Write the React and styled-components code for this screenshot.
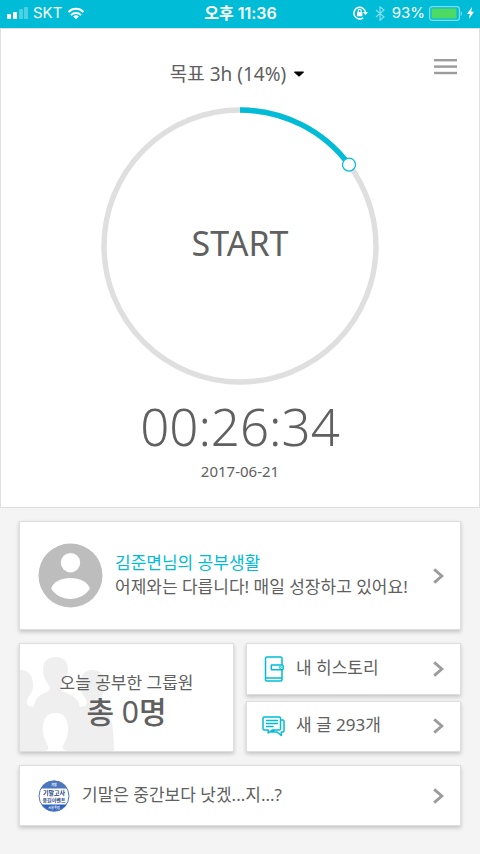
import styled, { createGlobalStyle } from 'styled-components';

const GlobalStyle = createGlobalStyle`
    * {
        box-sizing: border-box;
    }
    body {
        margin: 0;
        background-color: #f4f4f4;
        color: #606060;
        font-family: "Noto Sans", "Noto Sans CJK KR", sans-serif;
    }
    button {
        border: 0;
        padding: 0;
        background: none;
        color: inherit;
        font-family: inherit;
        cursor: pointer;
    }
    svg {
        display: block;
        flex-shrink: 0;
    }
`

const StatusBar = styled.header`
    display: grid;
    grid-template-columns: 1fr auto 1fr;
    align-items: center;
    height: 28px;
    padding: 0 6px 2px 7px;
    background-color: #00bcd7;
    color: #fff;
    font-family: Inter, "Noto Sans CJK KR", sans-serif;
    font-size: 15px;
    line-height: 20px;
`

const StatusGroup = styled.div`
    display: flex;
    align-items: center;
    justify-content: ${props => props.$end ? "flex-end" : "flex-start"};
    gap: ${props => props.$gap || "5px"};
`

const Clock = styled.time`
    font-size: 16px;
    font-weight: 600;
`

const TimerPanel = styled.section`
    display: flex;
    flex-direction: column;
    align-items: center;
    padding-bottom: 26px;
    border: 1px solid #dedede;
    background-color: #fff;
`

const PanelHeader = styled.div`
    width: 100%;
    display: grid;
    grid-template-columns: 1fr auto 1fr;
    align-items: start;
    padding: 24px 22px 0 16px;
`

const GoalButton = styled.button`
    grid-column: 2;
    display: flex;
    align-items: center;
    gap: 8px;
    margin-top: 7px;
    font-size: 19px;
    line-height: 28px;
`

const MenuButton = styled.button`
    justify-self: end;
    height: 28px;
`

const StartButton = styled.button`
    display: grid;
    place-items: center;
    margin-top: 18px;
    border-radius: 50%;

    > * {
        grid-area: 1 / 1;
    }
`

const StartLabel = styled.span`
    font-size: 34px;
    line-height: 40px;
    padding-bottom: 6px;
`

const Elapsed = styled.div`
    margin-top: 5px;
    font-size: 51px;
    font-weight: 300;
    line-height: 70px;
`

const StudyDate = styled.time`
    font-size: 15px;
    line-height: 20px;
`

const Cards = styled.main`
    display: grid;
    grid-template-columns: 1fr 1fr;
    gap: 13px 12px;
    padding: 13px 19px 28px;
`

const Card = styled.a`
    grid-column: ${props => props.$wide ? "1 / -1" : "auto"};
    position: relative;
    display: flex;
    align-items: center;
    gap: ${props => props.$gap || "12px"};
    min-height: ${props => props.$height};
    padding: 0 16px 0 ${props => props.$left || "18px"};
    border: 1px solid #dedede;
    background-color: #fff;
    box-shadow: 0 2px 4px rgba(0, 0, 0, 0.2);
    color: inherit;
    font-size: 17px;
    line-height: 24px;
    text-decoration: none;
`

const CardText = styled.span`
    flex: 1;
    padding-bottom: 2px;
    white-space: nowrap;
`

const UserTitle = styled.span`
    display: block;
    color: #00bcd7;
`

const GroupCard = styled(Card)`
    flex-direction: column;
    justify-content: center;
    gap: 0;
    padding: 4px 0 0;
    overflow: hidden;
`

const GroupArt = styled.svg`
    position: absolute;
    left: 0;
    bottom: 0;
`

const GroupTitle = styled.span`
    position: relative;
`

const GroupCount = styled.strong`
    position: relative;
    font-size: 30px;
    font-weight: 500;
    line-height: 34px;
`

const CountNumber = styled.span`
    font-weight: 400;
`

const SideCards = styled.div`
    display: grid;
    gap: 6px;
`

const SignalIcon = () => (
    <svg width="21" height="13" viewBox="0 0 21 13" fill="#fff" aria-hidden="true">
        <rect x="0" y="7" width="4" height="5" rx="1" />
        <rect x="6" y="5" width="4" height="7" rx="1" />
        <rect x="12" y="2" width="4" height="10" rx="1" opacity=".3" />
        <rect x="17" y="0" width="4" height="12" rx="1" opacity=".3" />
    </svg>
)

const WifiIcon = () => (
    <svg width="18" height="13" viewBox="0 0 18 13" fill="none" stroke="#fff" strokeWidth="2" aria-hidden="true">
        <path d="M1.500 5a10.500 10.500 0 0 1 15 0M4 8.100a7 7 0 0 1 10 0" />
        <path d="M9 12.200 6.200 9.500a4 4 0 0 1 5.600 0Z" fill="#fff" stroke="none" />
    </svg>
)

const LockIcon = () => (
    <svg width="15" height="14" viewBox="0 0 15 14" fill="none" stroke="#fff" aria-hidden="true">
        <path d="M10.200 11.800a5.800 5.800 0 1 1 2.300-5.300" strokeWidth="1.500" />
        <path d="M10 6h5l-2.500 3.200Z" fill="#fff" stroke="none" />
        <rect x="4" y="6" width="5.400" height="4.200" rx=".5" fill="#fff" stroke="none" />
        <path d="M5.200 6.200V4.900a1.500 1.500 0 0 1 3 0v1.300" strokeWidth="1.100" />
    </svg>
)

const BluetoothIcon = () => (
    <svg width="10" height="15" viewBox="0 0 10 15" fill="none" stroke="#fff" strokeWidth="1.200" opacity=".5" aria-hidden="true">
        <path d="M1 4l8 7-4 3.300V.7L9 4l-8 7" />
    </svg>
)

const BatteryIcon = () => (
    <svg width="34" height="15" viewBox="0 0 34 15" fill="none" aria-hidden="true">
        <rect x=".6" y=".6" width="29.800" height="13.800" rx="2.600" stroke="#fff" strokeWidth="1.200" opacity=".5" />
        <rect x="2.500" y="2.500" width="25" height="10" rx="1" fill="#4cd964" />
        <path d="M31.800 5c1.700.7 1.700 4.300 0 5Z" fill="#fff" opacity=".5" />
    </svg>
)

const BoltIcon = () => (
    <svg width="7" height="12" viewBox="0 0 7 12" fill="#fff" aria-hidden="true">
        <path d="M5 0 0 7h2.800L2 12l5-7.200H4.200Z" />
    </svg>
)

const CaretIcon = () => (
    <svg width="10" height="6" viewBox="0 0 10 6" aria-hidden="true">
        <path d="M0 1.200Q0 .5.8.5h8.400q.8 0 .8.7L5.600 5.300q-.6.4-1.200 0Z" fill="#000" />
    </svg>
)

const MenuIcon = () => (
    <svg width="23" height="16" viewBox="0 0 23 16" fill="#9c9c9c" aria-hidden="true">
        <rect y="0" width="23" height="2.400" />
        <rect y="6.400" width="23" height="2.400" />
        <rect y="12.800" width="23" height="2.400" />
    </svg>
)

const Dial = () => (
    <svg width="280" height="280" viewBox="0 0 280 280" fill="none" aria-hidden="true">
        <circle cx="140" cy="140" r="136" stroke="#dfdfdf" strokeWidth="5.400" />
        <path d="M140 4a136 136 0 0 1 109 54.700" stroke="#00bcd7" strokeWidth="5.400" />
        <circle cx="249" cy="58.700" r="6.500" fill="#fff" stroke="#00bcd7" strokeWidth="1.300" />
    </svg>
)

const AvatarIcon = () => (
    <svg width="65" height="65" viewBox="0 0 65 65" aria-hidden="true">
        <circle cx="32.500" cy="32.500" r="32" fill="#bdbdbd" />
        <circle cx="32.500" cy="19.700" r="9.700" fill="#fff" />
        <path d="M13.200 45.800C14.600 38.800 24 35 32.500 35s17.900 3.800 19.300 10.800C47.800 52 40.500 56 32.500 56S17.200 52 13.200 45.800Z" fill="#fff" />
    </svg>
)

const ChevronIcon = () => (
    <svg width="11" height="16" viewBox="0 0 11 16" fill="none" aria-hidden="true">
        <path d="M1.200 1.300 8.800 8l-7.600 6.700" stroke="#9c9c9c" strokeWidth="2.900" />
    </svg>
)

const PeopleArt = () => (
    <GroupArt width="95" height="107" viewBox="0 0 95 107" fill="#efefef" aria-hidden="true">
        <path d="M0 26C9 26 13 32 13 41c0 7-3 10-5 13-2 4-2 6 1 8l5 1C15 53 20 51 27 48c4-2 3-5 1-8-3-4-5-8-5-14 0-8 4-13 12.500-13S48 18 48 26c0 6-2 10-5 14-2 3-3 6 1 8 7 3 14 5 16 15l5-1c3-2 2-5 0-8-3-4-5-7-5-13 0-9 4-15 12.500-15S85 32 85 41c0 6-2 9-4 13-3 4-3 7 0 9 9 5 13 14 13 44H47c-5-1-5-4-3-7 2-4 4-8 4-16 0-9-4-15-12.500-15S23 75 23 84c0 8 2 12 4 16s2 6-2 7H0Z" />
    </GroupArt>
)

const BookIcon = () => (
    <svg width="26" height="26" viewBox="0 0 26 26" fill="none" stroke="#00bcd7" strokeWidth="1.500" aria-hidden="true">
        <path d="M20 9V2.500Q20 1 18.500 1H5Q3.500 1 3.500 2.500v21Q3.500 25 5 25h13.500q1.500 0 1.500-1.500V14" />
        <path d="M3.500 22H20" />
        <path d="M20 9H9.800q-.5 0-.5.5v3.800q0 .5.5.5H20q1.200 0 1.200-1.200v-2.400Q21.200 9 20 9Z" />
        <circle cx="18.300" cy="11.400" r="1" strokeWidth="1" />
    </svg>
)

const ChatIcon = () => (
    <svg width="26" height="22" viewBox="0 0 26 22" fill="none" stroke="#00bcd7" strokeWidth="1.500" strokeLinejoin="round" aria-hidden="true">
        <path d="M2.300 2h14.900q1.300 0 1.300 1.300v10.400q0 1.300-1.300 1.300h-7L6.200 18v-3H2.300Q1 15 1 13.700V3.300Q1 2 2.300 2Z" />
        <path d="M18.500 5h2.300Q22 5 22 6.200v9.600q0 1.200-1.200 1.200h-1.500v3.500L15 17H9l3.500-2" />
        <path d="M4 5.500h12M4 8.500h12M4 11.500h7.500" />
    </svg>
)

const EventBadge = () => (
    <svg width="32" height="32" viewBox="0 0 32 32" role="img" aria-label="기말고사 응원이벤트">
        <circle cx="16" cy="16" r="15.500" fill="#fff" />
        <path d="M2.500 8.500a15.500 15.500 0 0 1 27 0Z" fill="#4e76bd" />
        <path d="M3 24.500a15.500 15.500 0 0 0 26 0Z" fill="#2f62bd" />
        <circle cx="16" cy="16" r="15" fill="none" stroke="#4e76bd" />
        <g textAnchor="middle" fontFamily="Noto Sans CJK KR, sans-serif" fontWeight="700">
            <text x="16" y="6" fontSize="3" fill="#fff">기말</text>
            <text x="16" y="15" fontSize="6" fill="#27457f">기말고사</text>
            <text x="16" y="22" fontSize="5" fill="#27457f">응원이벤트</text>
            <text x="16" y="29" fontSize="3" fill="#fff">시험 특집</text>
        </g>
    </svg>
)

const App = () => {
  return (
    <>
        <GlobalStyle />
        <StatusBar>
            <StatusGroup>
                <SignalIcon />
                <span>SKT</span>
                <WifiIcon />
            </StatusGroup>
            <Clock>오후 11:36</Clock>
            <StatusGroup $end $gap="4px">
                <StatusGroup $gap="7px">
                    <LockIcon />
                    <BluetoothIcon />
                    <span>93%</span>
                </StatusGroup>
                <BatteryIcon />
                <BoltIcon />
            </StatusGroup>
        </StatusBar>
        <TimerPanel>
            <PanelHeader>
                <GoalButton>
                    목표 3h (14%)
                    <CaretIcon />
                </GoalButton>
                <MenuButton aria-label="메뉴">
                    <MenuIcon />
                </MenuButton>
            </PanelHeader>
            <StartButton>
                <Dial />
                <StartLabel>START</StartLabel>
            </StartButton>
            <Elapsed>00:26:34</Elapsed>
            <StudyDate>2017-06-21</StudyDate>
        </TimerPanel>
        <Cards>
            <Card href="#life" $wide $height="109px">
                <AvatarIcon />
                <CardText>
                    <UserTitle>김준면님의 공부생활</UserTitle>
                    어제와는 다릅니다! 매일 성장하고 있어요!
                </CardText>
                <ChevronIcon />
            </Card>
            <GroupCard href="#group" $height="109px">
                <PeopleArt />
                <GroupTitle>오늘 공부한 그룹원</GroupTitle>
                <GroupCount>총 <CountNumber>0</CountNumber>명</GroupCount>
            </GroupCard>
            <SideCards>
                <Card href="#history" $height="51px" $left="15px" $gap="8px">
                    <BookIcon />
                    <CardText>내 히스토리</CardText>
                    <ChevronIcon />
                </Card>
                <Card href="#posts" $height="51px" $left="15px" $gap="8px">
                    <ChatIcon />
                    <CardText>새 글 293개</CardText>
                    <ChevronIcon />
                </Card>
            </SideCards>
            <Card href="#event" $wide $height="61px">
                <EventBadge />
                <CardText>기말은 중간보다 낫겠...지...?</CardText>
                <ChevronIcon />
            </Card>
        </Cards>
    </>
  )
}

export default App
